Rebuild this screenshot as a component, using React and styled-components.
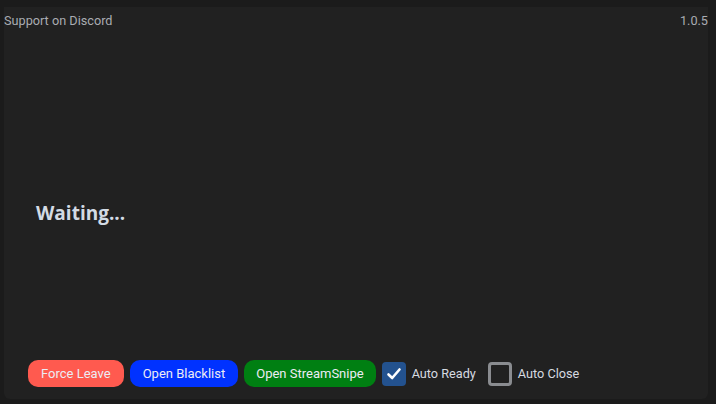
import React, { useState } from "react";
import styled, { createGlobalStyle } from "styled-components";

const Global = createGlobalStyle`
  html, body {
    margin: 0;
    padding: 0;
    background: #1b1b1b;
  }
  body {
    font-family: Roboto, "Liberation Sans", Arial, sans-serif;
  }
`;

const Frame = styled.div`
  width: 716px;
  height: 404px;
  box-sizing: border-box;
  padding: 7px 8px 5px 4px;
  background: #1b1b1b;
  display: flex;
`;

const Panel = styled.div`
  flex: 1;
  background: #212121;
  border-radius: 0 0 6px 6px;
  display: flex;
  flex-direction: column;
`;

const Header = styled.div`
  display: flex;
  justify-content: space-between;
  align-items: center;
  height: 27px;
  font-size: 12.7px;
  color: #a9acb2;
`;

const HeaderLink = styled.a`
  color: inherit;
  text-decoration: none;
  cursor: pointer;
`;

const Body = styled.div`
  flex: 1;
  display: flex;
  align-items: center;
  padding: 32px 0 0 32px;
`;

const Status = styled.h1`
  margin: 0;
  font-family: "Open Sans", "Noto Sans", sans-serif;
  font-weight: 700;
  font-size: 19px;
  color: #d3dbe4;
`;

const Footer = styled.div`
  display: flex;
  align-items: center;
  gap: 6px;
  padding: 0 0 12px 24px;
`;

const Button = styled.button`
  height: 27px;
  padding: 0 ${(p) => p.$pad || 13}px;
  border: none;
  border-radius: 10px;
  background: ${(p) => p.$bg};
  color: #ececf4;
  font-family: Roboto, "Liberation Sans", sans-serif;
  font-size: 13px;
  cursor: pointer;
`;

const Toggle = styled.label`
  display: flex;
  align-items: center;
  gap: 6px;
  margin-right: 6px;
  font-size: 12.7px;
  color: #d6dae0;
  cursor: pointer;
`;

const Box = styled.span`
  width: 24px;
  height: 24px;
  box-sizing: border-box;
  border-radius: 4px;
  display: flex;
  align-items: center;
  justify-content: center;
  background: ${(p) => (p.$on ? "#23528f" : "transparent")};
  border: ${(p) => (p.$on ? "none" : "3px solid #8a8c90")};
`;

function Check({ label, defaultOn }) {
  const [on, setOn] = useState(defaultOn);
  return (
    <Toggle onClick={() => setOn(!on)}>
      <Box $on={on}>
        {on && (
          <svg width="16" height="16" viewBox="0 0 16 16">
            <path
              d="M2.5 8.5 L6.2 12 L13.5 3.5"
              fill="none"
              stroke="#ffffff"
              strokeWidth="2.6"
              strokeLinecap="round"
              strokeLinejoin="round"
            />
          </svg>
        )}
      </Box>
      {label}
    </Toggle>
  );
}

export default function App() {
  return (
    <>
      <Global />
      <Frame>
        <Panel>
          <Header>
            <HeaderLink>Support on Discord</HeaderLink>
            <span>1.0.5</span>
          </Header>
          <Body>
            <Status>Waiting...</Status>
          </Body>
          <Footer>
            <Button $bg="#ff5a4f">Force Leave</Button>
            <Button $bg="#0032ff">Open Blacklist</Button>
            <Button $bg="#007f12" $pad={12}>Open StreamSnipe</Button>
            <Check label="Auto Ready" defaultOn />
            <Check label="Auto Close" defaultOn={false} />
          </Footer>
        </Panel>
      </Frame>
    </>
  );
}
